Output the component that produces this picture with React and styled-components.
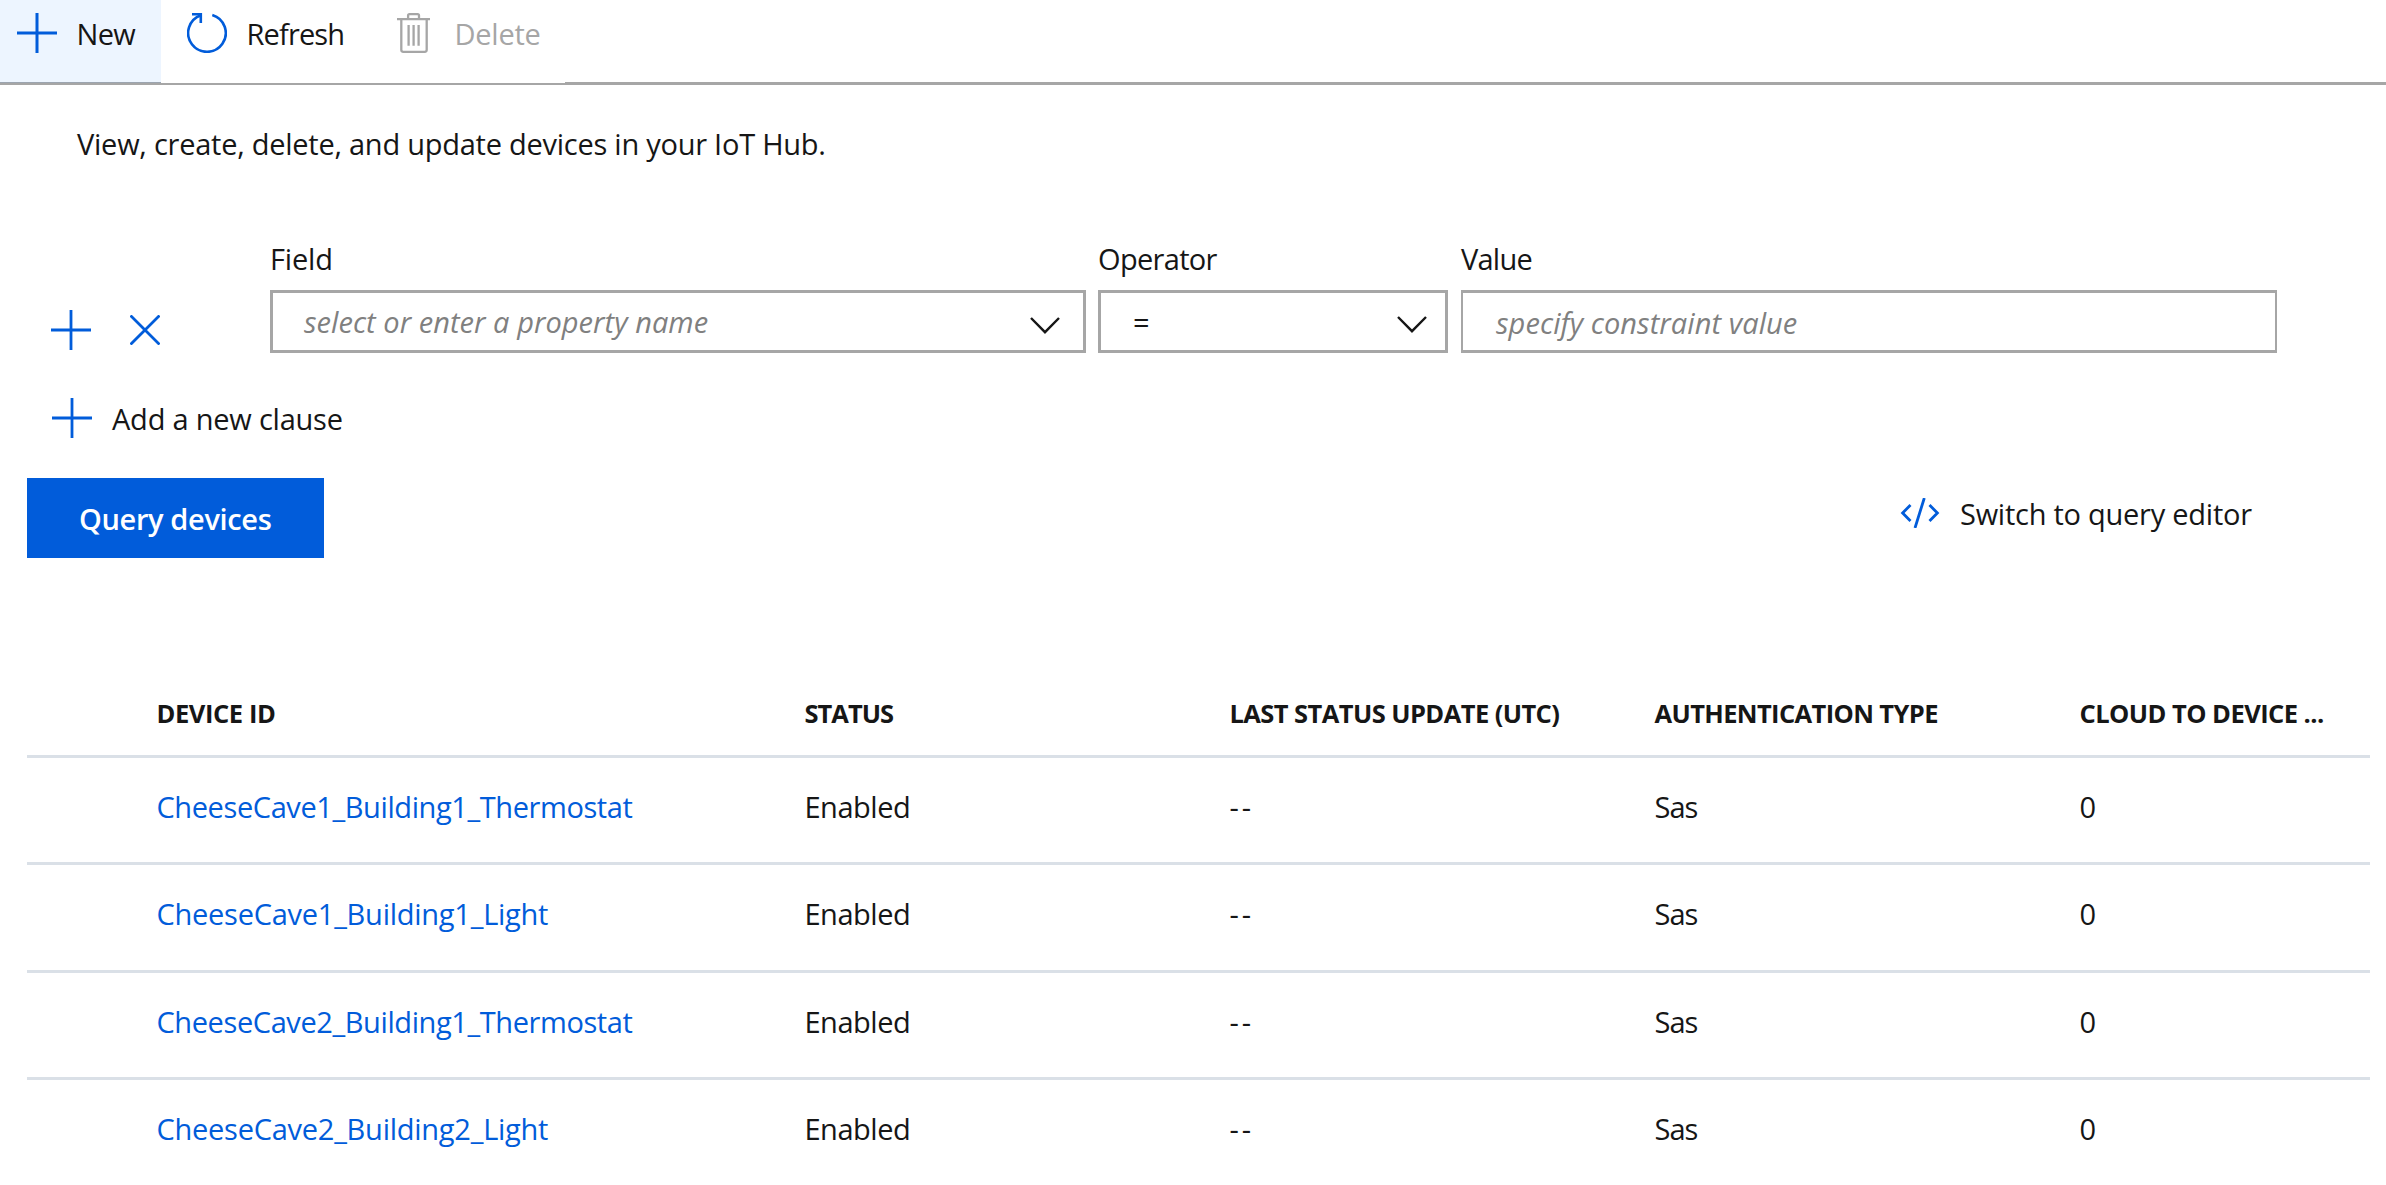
import React from 'react';
import styled, { createGlobalStyle } from 'styled-components';

const BLUE = '#015cda';
const INK = '#161616';
const GREY = '#a6a6a6';

const GlobalStyle = createGlobalStyle`
  * { box-sizing: border-box; }
  body {
    margin: 0;
    background: #fff;
    color: ${INK};
    font-family: 'Open Sans', 'Noto Sans', sans-serif;
    font-size: 29px;
    line-height: 40px;
    overflow: hidden;
  }
`;

const Page = styled.main`
  display: flex;
  flex-direction: column;
  width: 2386px;
  height: 1185px;
  overflow: hidden;
`;

const Text = styled.span`
  letter-spacing: ${(p) => p.$track || 0}px;
  white-space: nowrap;
`;

const Icon = styled.svg`
  display: block;
  flex: none;
  fill: none;
  stroke: ${(p) => p.$color || BLUE};
  stroke-width: ${(p) => p.$weight || 2.8};
`;

const Toolbar = styled.header`
  display: flex;
  align-items: flex-start;
  flex: none;
  height: 85px;
  border-bottom: 3px solid ${GREY};
`;

const Command = styled.button`
  display: flex;
  align-items: flex-start;
  gap: ${(p) => p.$gap}px;
  width: ${(p) => p.$width}px;
  height: 83px;
  padding: 13px 0 0 ${(p) => p.$inset}px;
  border: 0;
  border-bottom: 1px solid ${(p) => (p.$active ? '#9ca5b0' : '#fff')};
  background: ${(p) => (p.$active ? '#edf5ff' : '#fff')};
  color: ${(p) => (p.$disabled ? GREY : INK)};
  font: inherit;
  line-height: 42px;
`;

const Description = styled.p`
  margin: 39px 0 0;
  padding-left: 77px;
`;

const Clause = styled.section`
  display: flex;
  margin-top: 75px;
`;

const ClauseActions = styled.div`
  display: flex;
  flex: none;
  align-items: center;
  gap: 39.5px;
  width: 270px;
  height: 40px;
  margin-top: 71px;
  padding-left: 50.5px;
`;

const Fields = styled.div`
  display: grid;
  grid-template-columns: 816px 351px 816px;
  column-gap: 12px;
`;

const Field = styled.div`
  display: flex;
  flex-direction: column;
  gap: 11px;
`;

const Control = styled.div`
  display: flex;
  justify-content: space-between;
  align-items: flex-start;
  width: ${(p) => p.$width || 816}px;
  height: 63px;
  padding: ${(p) => p.$top || 9}px ${(p) => p.$end || 23}px 0 ${(p) => p.$inset || 31}px;
  border: solid ${GREY};
  border-width: 3px ${(p) => p.$side || 3}px;
`;

const Placeholder = styled(Text)`
  color: #808080;
  font-style: italic;
`;

const Chevron = styled(Icon)`
  margin-top: ${(p) => p.$drop}px;
`;

const AddClause = styled.div`
  display: flex;
  align-items: center;
  gap: 20px;
  height: 40px;
  margin-top: 45px;
  padding: 0 0 0 52px;
`;

const AddLabel = styled(Text)`
  padding-top: 2px;
`;

const Actions = styled.div`
  display: flex;
  justify-content: space-between;
  align-items: flex-start;
  height: 80px;
  margin: 40px 133px 0 27px;
`;

const QueryButton = styled.button`
  width: 297px;
  height: 80px;
  padding: 1px 0 0 52px;
  border: 0;
  background: ${BLUE};
  color: #fff;
  font: inherit;
  font-weight: 600;
  text-align: left;
`;

const SwitchLink = styled.div`
  display: flex;
  align-items: flex-start;
  gap: 20px;
  width: 353px;
  padding-top: 16px;
`;

const CodeIcon = styled(Icon)`
  margin-top: 4px;
`;

const Table = styled.div`
  display: flex;
  flex-direction: column;
  margin: 135px 16px 0 27px;
`;

const Row = styled.div`
  display: grid;
  grid-template-columns: 648px 425px 425px 425px 1fr;
  flex: none;
  height: 107.4px;
  padding: 29px 0 0 129.5px;
  border-bottom: 3px solid #dae0e7;
`;

const HeaderRow = styled(Row)`
  height: 65px;
  padding-top: 0;
  font-size: 25.5px;
  font-weight: 700;
`;

const DeviceLink = styled(Text)`
  color: ${BLUE};
`;

const Plus = ({ weight }) => (
  <Icon width="40" height="40" viewBox="0 0 40 40" $weight={weight}>
    <path d="M20 0V40M0 20H40" />
  </Icon>
);

const Down = ({ drop }) => (
  <Chevron width="30" height="17" viewBox="0 0 30 17" $color={INK} $weight={2.4} $drop={drop}>
    <path d="M1 1L15 15.2L29 1" />
  </Chevron>
);

const columns = [
  ['DEVICE ID', -0.42],
  ['STATUS', -1.0],
  ['LAST STATUS UPDATE (UTC)', -0.57],
  ['AUTHENTICATION TYPE', -0.615],
  ['CLOUD TO DEVICE ...', -0.54],
];

const devices = [
  ['CheeseCave1_Building1_Thermostat', -0.408],
  ['CheeseCave1_Building1_Light', -0.253],
  ['CheeseCave2_Building1_Thermostat', -0.408],
  ['CheeseCave2_Building2_Light', -0.253],
];

export default function App() {
  return (
    <Page>
      <GlobalStyle />
      <Toolbar>
        <Command $active $width={161} $inset={17} $gap={19.5}>
          <Plus weight={3} />
          <Text $track={-0.7}>New</Text>
        </Command>
        <Command $width={206} $inset={26} $gap={19.5}>
          <Icon width="40" height="40" viewBox="0 0 40 40" $weight={2.6}>
            <path d="M25.3 2A18.8 18.8 0 1 1 14 2.2" />
            <path d="M5 1.2H13.8V10" />
          </Icon>
          <Text $track={-0.85}>Refresh</Text>
        </Command>
        <Command $disabled $width={198} $inset={30} $gap={24.5}>
          <Icon width="33" height="40" viewBox="0 0 33 40" $color={GREY} $weight={2.3}>
            <path d="M0 6.2H33M11.1 5V2.6Q11.1 1.2 12.5 1.2H20.6Q22 1.2 22 2.6V5" />
            <path d="M4.3 6.5V36.8Q4.3 38.8 6.3 38.8H27.7Q29.7 38.8 29.7 36.8V6.5" />
            <path d="M11.6 12V32.7M16.6 12V32.7M21.6 12V32.7" />
          </Icon>
          <Text $track={-0.25}>Delete</Text>
        </Command>
      </Toolbar>

      <Description>
        <Text $track={-0.25}>View, create, delete, and update devices in your IoT Hub.</Text>
      </Description>

      <Clause>
        <ClauseActions>
          <Plus />
          <Icon width="30" height="30" viewBox="0 0 30 30">
            <path d="M0.5 0.5L29.5 29.5M29.5 0.5L0.5 29.5" />
          </Icon>
        </ClauseActions>
        <Fields>
          <Field>
            <Text $track={-0.15}>Field</Text>
            <Control>
              <Placeholder $track={0.045}>select or enter a property name</Placeholder>
              <Down drop={15} />
            </Control>
          </Field>
          <Field>
            <Text $track={-0.68}>Operator</Text>
            <Control $width={350} $end={18} $inset={32}>
              <Text>=</Text>
              <Down drop={14} />
            </Control>
          </Field>
          <Field>
            <Text $track={-0.77}>Value</Text>
            <Control $side={2} $top={10} $inset={33}>
              <Placeholder $track={0.075}>specify constraint value</Placeholder>
            </Control>
          </Field>
        </Fields>
      </Clause>

      <AddClause>
        <Plus />
        <AddLabel $track={-0.22}>Add a new clause</AddLabel>
      </AddClause>

      <Actions>
        <QueryButton>
          <Text $track={-0.36}>Query devices</Text>
        </QueryButton>
        <SwitchLink>
          <CodeIcon width="40" height="30" viewBox="0 0 40 30">
            <path d="M10.5 7L2.6 15L10.5 23M29.5 7L37.4 15L29.5 23M24.3 0L15 30" />
          </CodeIcon>
          <Text $track={-0.25}>Switch to query editor</Text>
        </SwitchLink>
      </Actions>

      <Table>
        <HeaderRow>
          {columns.map(([title, track]) => (
            <Text key={title} $track={track}>{title}</Text>
          ))}
        </HeaderRow>
        {devices.map(([id, track]) => (
          <Row key={id}>
            <DeviceLink $track={track}>{id}</DeviceLink>
            <Text $track={-0.49}>Enabled</Text>
            <Text $track={3}>--</Text>
            <Text $track={-0.95}>Sas</Text>
            <Text>0</Text>
          </Row>
        ))}
      </Table>
    </Page>
  );
}
